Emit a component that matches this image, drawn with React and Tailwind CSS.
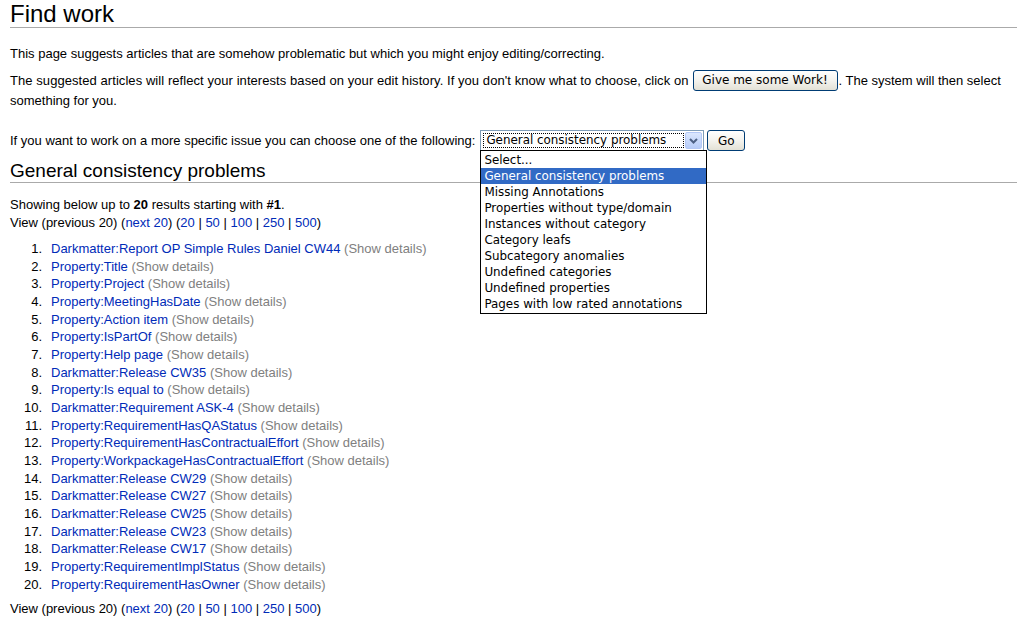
import React from "react";

const items = [
  ["Darkmatter:Report OP Simple Rules Daniel CW44"],
  ["Property:Title"],
  ["Property:Project"],
  ["Property:MeetingHasDate"],
  ["Property:Action item"],
  ["Property:IsPartOf"],
  ["Property:Help page"],
  ["Darkmatter:Release CW35"],
  ["Property:Is equal to"],
  ["Darkmatter:Requirement ASK-4"],
  ["Property:RequirementHasQAStatus"],
  ["Property:RequirementHasContractualEffort"],
  ["Property:WorkpackageHasContractualEffort"],
  ["Darkmatter:Release CW29"],
  ["Darkmatter:Release CW27"],
  ["Darkmatter:Release CW25"],
  ["Darkmatter:Release CW23"],
  ["Darkmatter:Release CW17"],
  ["Property:RequirementImplStatus"],
  ["Property:RequirementHasOwner"],
];

const options = [
  "Select...",
  "General consistency problems",
  "Missing Annotations",
  "Properties without type/domain",
  "Instances without category",
  "Category leafs",
  "Subcategory anomalies",
  "Undefined categories",
  "Undefined properties",
  "Pages with low rated annotations",
];

function L({ children }) {
  return <span className="text-[#002bb8]">{children}</span>;
}

function ViewLine() {
  return (
    <div className="h-[18px] leading-[18px]">
      View (previous 20) (<L>next 20</L>) (<L>20</L> | <L>50</L> | <L>100</L> |{" "}
      <L>250</L> | <L>500</L>)
    </div>
  );
}

function XPButton({ children, className = "" }) {
  return (
    <span
      className={
        "inline-flex items-center justify-center h-[21px] rounded-[3px] border border-[#003c74] bg-gradient-to-b from-[#ffffff] via-[#f4f3ee] to-[#e3e1d6] text-black align-middle " +
        className
      }
      style={{ fontFamily: '"DejaVu Sans", sans-serif', fontSize: "12px" }}
    >
      {children}
    </span>
  );
}

export default function App() {
  return (
    <div
      className="bg-white text-black w-[1017px] h-[623px] overflow-hidden px-[10px] text-[13px]"
      style={{ fontFamily: '"Liberation Sans", Arial, sans-serif' }}
    >
      <h1 className="h-[28px] leading-[28px] text-[24px] font-normal border-b border-[#aaaaaa] mr-[-10px]">
        Find work
      </h1>

      <p className="mt-[16px] h-[19px] leading-[19px]">
        This page suggests articles that are somehow problematic but which you might enjoy editing/correcting.
      </p>

      <div className="mt-[7px]">
        <div className="h-[21px] leading-[21px] flex items-center whitespace-nowrap">
          <span className="tracking-[0.065px]">
            The suggested articles will reflect your interests based on your edit history. If you don't know what to choose, click on
          </span>
          <XPButton className="ml-[4px] mr-[1px] w-[145px]">Give me some Work!</XPButton>
          <span>. The system will then select</span>
        </div>
        <div className="h-[19px] leading-[19px]">something for you.</div>
      </div>

      <div className="mt-[20px] h-[21px] flex items-center whitespace-nowrap relative">
        <span>If you want to work on a more specific issue you can choose one of the following:</span>
        <span className="ml-[5px] relative inline-flex items-center w-[224px] h-[21px] border border-[#7f9db9] bg-white">
          <span
            className="ml-[2px] flex-1 h-[15px] leading-[13px] px-[2px] border border-dotted border-black"
            style={{ fontFamily: '"DejaVu Sans", sans-serif', fontSize: "11.9px" }}
          >
            General consistency problems
          </span>
          <span className="ml-[1px] mr-[1px] w-[17px] h-[17px] rounded-[2px] border border-[#b4c8f6] bg-gradient-to-b from-[#dbe7fe] to-[#b7ccf8] flex items-center justify-center">
            <svg width="9" height="6" viewBox="0 0 9 6">
              <path d="M1 1 L4.5 4.5 L8 1" stroke="#4d6185" strokeWidth="2" fill="none" />
            </svg>
          </span>
          <div
            className="absolute left-[-1px] top-[19px] w-[227px] border border-black bg-white z-10 py-[1px]"
            style={{ fontFamily: '"DejaVu Sans", sans-serif', fontSize: "11.9px" }}
          >
            {options.map((o, i) => (
              <div
                key={o}
                className={
                  "h-[16px] leading-[16px] pl-[3px] " +
                  (i === 1 ? "bg-[#316ac5] text-white" : "text-black")
                }
              >
                {o}
              </div>
            ))}
          </div>
        </span>
        <XPButton className="ml-[3px] w-[38px]">Go</XPButton>
      </div>

      <h2 className="mt-[8px] h-[24px] leading-[24px] text-[19px] font-normal border-b border-[#aaaaaa] mr-[-10px]">
        General consistency problems
      </h2>

      <div className="mt-[13px] h-[18px] leading-[18px]">
        Showing below up to <b>20</b> results starting with <b>#1</b>.
      </div>
      <ViewLine />

      <div className="mt-[8px]">
        {items.map(([name], i) => (
          <div key={i} className="flex h-[17.68px] leading-[17.68px] whitespace-nowrap">
            <span className="w-[32px] text-right">{i + 1}.</span>
            <span className="ml-[9px]">
              <L>{name}</L> <span className="text-[#808080]">(Show details)</span>
            </span>
          </div>
        ))}
      </div>

      <div className="mt-[7px]">
        <ViewLine />
      </div>
    </div>
  );
}
